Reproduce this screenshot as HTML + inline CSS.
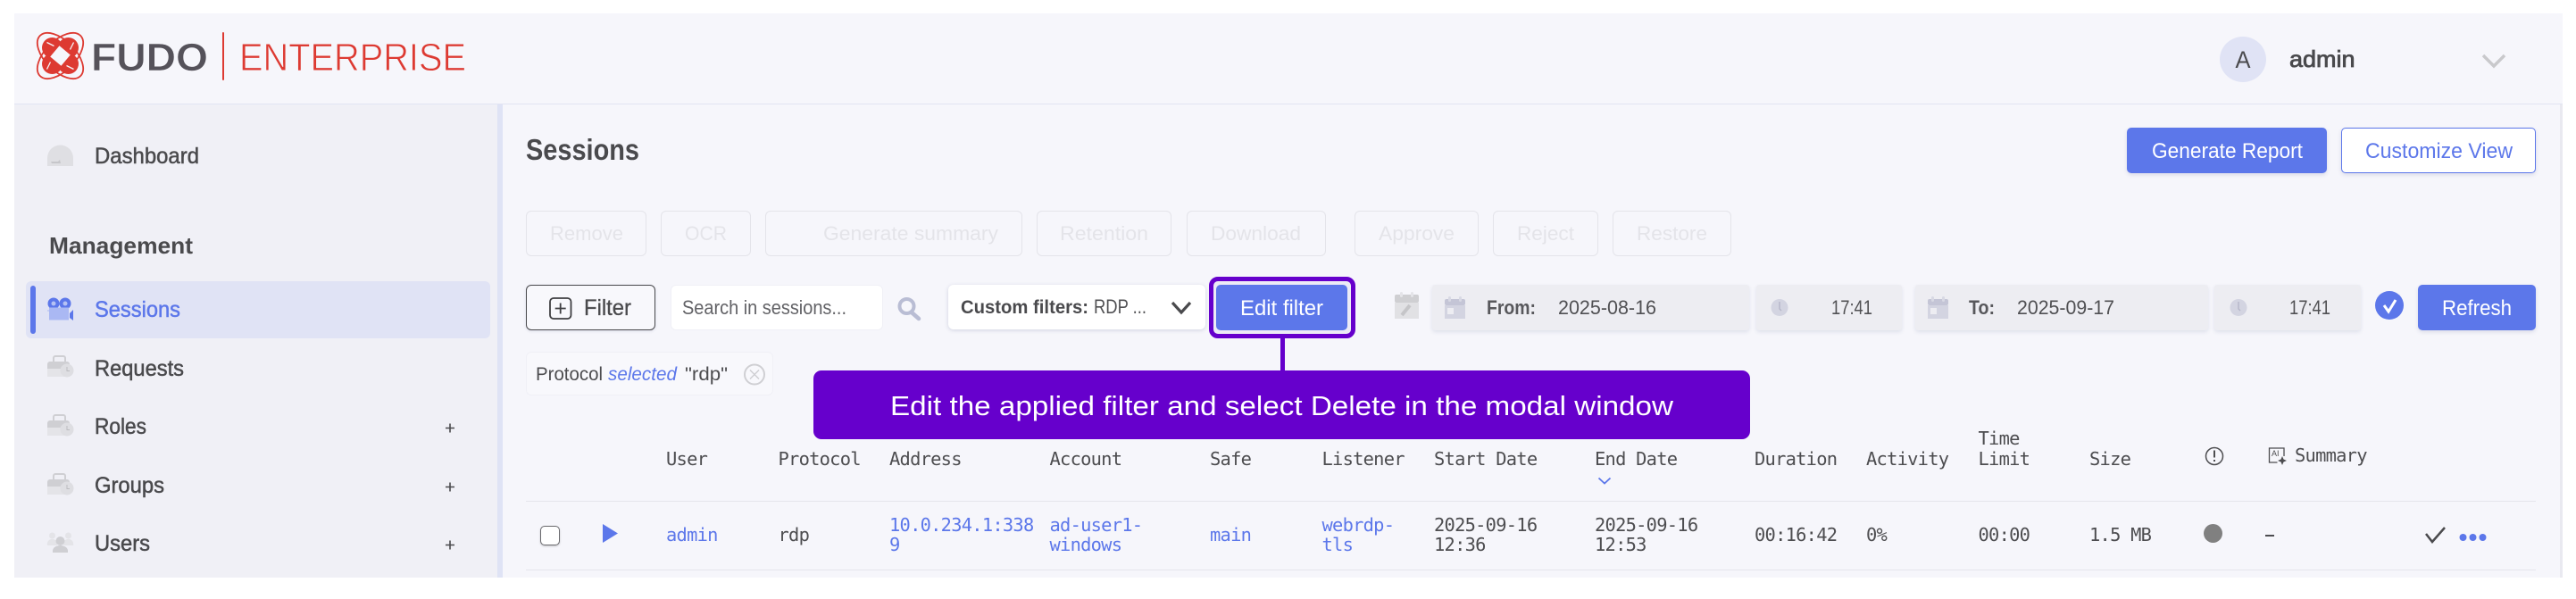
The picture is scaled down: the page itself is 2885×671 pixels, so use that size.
<!DOCTYPE html>
<html lang="en">
<head>
<meta charset="utf-8">
<title>Fudo Enterprise - Sessions</title>
<style>
html,body{margin:0;padding:0;background:#fff;}
body{width:2885px;height:671px;overflow:hidden;position:relative;}
.b{position:absolute;box-sizing:border-box;}
svg{position:absolute;left:0;top:0;}
text{font-family:"Liberation Sans",sans-serif;}
.s{font-size:25px;fill:#4a4a4d;stroke:#4a4a4d;stroke-width:.5px;}
.d{font-size:22.5px;fill:#e4e4e9;}
.m{font-family:"DejaVu Sans Mono","Liberation Mono",monospace;font-size:20.4px;letter-spacing:-.74px;fill:#4d4d50;}
.l{fill:#5c77ea;}
.t{font-size:22px;fill:#505053;}
.bt{font-size:24px;}
</style>
</head>
<body>
<!-- app frame -->
<div class="b" style="left:16px;top:15px;width:2854px;height:632px;background:#f6f6fb;"></div>
<div class="b" style="left:16px;top:116px;width:2854px;height:1px;background:#e1e4f3;"></div>
<div class="b" style="left:16px;top:117px;width:541px;height:530px;background:#f0f0f6;"></div>
<div class="b" style="left:557px;top:117px;width:6px;height:530px;background:#dfe3f5;"></div>
<div class="b" style="left:2867px;top:117px;width:3px;height:530px;background:#e9e9f0;"></div>
<!-- sidebar active -->
<div class="b" style="left:29px;top:315px;width:520px;height:64px;background:#e0e3f5;border-radius:6px;"></div>
<div class="b" style="left:34px;top:320px;width:6px;height:54px;background:#5c77ea;border-radius:3px;"></div>
<!-- top buttons -->
<div class="b" style="left:2382px;top:143px;width:224px;height:51px;background:#5c77ea;border-radius:5px;box-shadow:0 2px 5px rgba(60,70,120,.15);"></div>
<div class="b" style="left:2622px;top:143px;width:218px;height:51px;background:#fff;border:1.5px solid #5c77ea;border-radius:5px;box-shadow:0 2px 5px rgba(60,70,120,.15);"></div>
<!-- disabled row -->
<div class="b dis" style="left:589px;top:236px;width:135px;height:51px;border:1.5px solid #e4e4ea;border-radius:6px;"></div>
<div class="b dis" style="left:740px;top:236px;width:101px;height:51px;border:1.5px solid #e4e4ea;border-radius:6px;"></div>
<div class="b dis" style="left:857px;top:236px;width:288px;height:51px;border:1.5px solid #e4e4ea;border-radius:6px;"></div>
<div class="b dis" style="left:1161px;top:236px;width:151px;height:51px;border:1.5px solid #e4e4ea;border-radius:6px;"></div>
<div class="b dis" style="left:1329px;top:236px;width:156px;height:51px;border:1.5px solid #e4e4ea;border-radius:6px;"></div>
<div class="b dis" style="left:1517px;top:236px;width:139px;height:51px;border:1.5px solid #e4e4ea;border-radius:6px;"></div>
<div class="b dis" style="left:1672px;top:236px;width:118px;height:51px;border:1.5px solid #e4e4ea;border-radius:6px;"></div>
<div class="b dis" style="left:1806px;top:236px;width:133px;height:51px;border:1.5px solid #e4e4ea;border-radius:6px;"></div>
<!-- filter row -->
<div class="b" style="left:589px;top:319px;width:145px;height:51px;background:#f8f8fc;border:1.5px solid #4a4a4d;border-radius:6px;box-shadow:0 1px 3px rgba(60,70,120,.15);"></div>
<div class="b" style="left:751px;top:319px;width:238px;height:51px;background:#fff;border:1px solid #f0f0f6;border-radius:6px;"></div>
<div class="b" style="left:1062px;top:319px;width:288px;height:50px;background:#fff;border-radius:6px;box-shadow:0 1px 5px rgba(60,70,120,.2);"></div>
<div class="b" style="left:1354px;top:310px;width:164px;height:69px;border:5.5px solid #6600cc;border-radius:10px;background:#ecebf6;"></div>
<div class="b" style="left:1362px;top:319px;width:147px;height:51px;background:#5c77ea;border-radius:5px;"></div>
<div class="b" style="left:1604px;top:319px;width:355px;height:51px;background:#ededf2;border-radius:3px;box-shadow:0 2px 4px rgba(60,70,120,.12);"></div>
<div class="b" style="left:1967px;top:319px;width:163px;height:51px;background:#ededf2;border-radius:3px;box-shadow:0 2px 4px rgba(60,70,120,.12);"></div>
<div class="b" style="left:2145px;top:319px;width:328px;height:51px;background:#ededf2;border-radius:3px;box-shadow:0 2px 4px rgba(60,70,120,.12);"></div>
<div class="b" style="left:2480px;top:319px;width:164px;height:51px;background:#ededf2;border-radius:3px;box-shadow:0 2px 4px rgba(60,70,120,.12);"></div>
<div class="b" style="left:2708px;top:319px;width:132px;height:51px;background:#5c77ea;border-radius:5px;box-shadow:0 2px 5px rgba(60,70,120,.15);"></div>
<!-- chip -->
<div class="b" style="left:589px;top:394px;width:277px;height:49px;background:#f8f8fc;border:1px solid #f0f0f6;border-radius:6px;"></div>
<!-- callout -->
<div class="b" style="left:1433.5px;top:379px;width:5px;height:37px;background:#6600cc;"></div>
<div class="b" style="left:911px;top:415px;width:1049px;height:77px;background:#6600cc;border-radius:9px;"></div>
<!-- table lines -->
<div class="b" style="left:589px;top:560.5px;width:2251px;height:1.5px;background:#e5e5ec;"></div>
<div class="b" style="left:589px;top:637.5px;width:2251px;height:1.5px;background:#e5e5ec;"></div>
<!-- checkbox / dots -->
<div class="b" style="left:605px;top:589px;width:22px;height:22px;background:#fff;border:1px solid #6a6a6e;border-radius:5px;box-shadow:0 1px 2px rgba(0,0,0,.2);"></div>
<div class="b" style="left:2486px;top:41px;width:52px;height:51px;background:#e0e3f5;border-radius:50%;"></div>
<div class="b" style="left:2660px;top:326px;width:32px;height:32px;background:#5c77ea;border-radius:50%;"></div>
<div class="b" style="left:2467.5px;top:587px;width:21px;height:21px;background:#808080;border-radius:50%;"></div>

<svg width="2885" height="671" viewBox="0 0 2885 671" xmlns="http://www.w3.org/2000/svg">
  <!-- logo -->
  <g transform="translate(67.5 62.5)">
    <ellipse rx="32" ry="17" transform="rotate(45)" fill="none" stroke="#dd3a32" stroke-width="1.800"/>
    <ellipse rx="32" ry="17" transform="rotate(-45)" fill="none" stroke="#dd3a32" stroke-width="1.800"/>
    <circle cx="-9" cy="-9" r="11.500" fill="#dd3a32"/>
    <circle cx="9" cy="-9" r="11.500" fill="#dd3a32"/>
    <circle cx="-9" cy="9" r="11.500" fill="#dd3a32"/>
    <circle cx="9" cy="9" r="11.500" fill="#dd3a32"/>
    <rect x="-8" y="-8" width="16" height="16" transform="rotate(40)" fill="#f6f6fb"/>
    <path d="M-15-15 L-7-11 M15-15 L11-7 M-15 15 L-11 7 M15 15 L7 11" stroke="#f6f6fb" stroke-width="1.300" fill="none"/>
  </g>
  <text x="102" y="79" font-size="44" font-weight="700" fill="#55525a" stroke="#f6f6fb" stroke-width=".6" textLength="131" lengthAdjust="spacingAndGlyphs">FUDO</text>
  <rect x="249" y="36" width="2" height="54" rx="1" fill="#dd3a32"/>
  <text x="268" y="79" font-size="44" fill="#dd3a32" stroke="#f6f6fb" stroke-width=".9" textLength="254" lengthAdjust="spacingAndGlyphs">ENTERPRISE</text>

  <!-- header right -->
  <text x="2512" y="76" font-size="27" fill="#4a4a4d" text-anchor="middle" textLength="17" lengthAdjust="spacingAndGlyphs">A</text>
  <text x="2564" y="75" class="s" style="stroke-width:.8px;font-size:26px" textLength="73.500" lengthAdjust="spacingAndGlyphs">admin</text>
  <path d="M2781 62 L2793 74 L2805 62" fill="none" stroke="#c9c9cc" stroke-width="3.500"/>

  <!-- sidebar icons -->
  <path d="M53 186 v-9 a14.500 14.500 0 0 1 29 0 v9 z" fill="#dfdfe3"/>
  <path d="M57 181 h8 l2 -2 1 4 h-10 z" fill="#c6c6ca"/>

  <g>
    <circle cx="60" cy="340" r="6.500" fill="#5c77ea"/><circle cx="73" cy="340" r="6.500" fill="#5c77ea"/>
    <circle cx="60" cy="340" r="2.500" fill="#b6c2f4"/><circle cx="73" cy="340" r="2.500" fill="#b6c2f4"/>
    <path d="M53 348.500 h2 v10 h22 v-14 h-22 v3 h-2 z" fill="#aab8f3"/>
    <path d="M78 351 l4 -4 v12 l-4 -3 z" fill="#5c77ea"/>
  </g>
  <g>
    <path d="M60 405 v-4 a2 2 0 0 1 2-2 h9 a2 2 0 0 1 2 2 v4" fill="none" stroke="#cfcfd3" stroke-width="2"/>
    <path d="M53 408 a3 3 0 0 1 3-3 h19 a3 3 0 0 1 3 3 v5 h-25 z" fill="#cfcfd3"/>
    <path d="M53 413 h25 v9 h-25 z" fill="#e4e4e8"/>
    <circle cx="75" cy="415" r="7.500" fill="#dedee2"/>
    <path d="M75 411 v4.500 h3" fill="none" stroke="#bcbcc0" stroke-width="1"/>
  </g>
  <g transform="translate(0 66)">
    <path d="M60 405 v-4 a2 2 0 0 1 2-2 h9 a2 2 0 0 1 2 2 v4" fill="none" stroke="#cfcfd3" stroke-width="2"/>
    <path d="M53 408 a3 3 0 0 1 3-3 h19 a3 3 0 0 1 3 3 v5 h-25 z" fill="#cfcfd3"/>
    <path d="M53 413 h25 v9 h-25 z" fill="#e4e4e8"/>
    <circle cx="75" cy="415" r="7.500" fill="#dedee2"/>
    <path d="M75 411 v4.500 h3" fill="none" stroke="#bcbcc0" stroke-width="1"/>
  </g>
  <g transform="translate(0 132)">
    <path d="M60 405 v-4 a2 2 0 0 1 2-2 h9 a2 2 0 0 1 2 2 v4" fill="none" stroke="#cfcfd3" stroke-width="2"/>
    <path d="M53 408 a3 3 0 0 1 3-3 h19 a3 3 0 0 1 3 3 v5 h-25 z" fill="#cfcfd3"/>
    <path d="M53 413 h25 v9 h-25 z" fill="#e4e4e8"/>
    <circle cx="75" cy="415" r="7.500" fill="#dedee2"/>
    <path d="M75 411 v4.500 h3" fill="none" stroke="#bcbcc0" stroke-width="1"/>
  </g>
  <g>
    <circle cx="58.500" cy="600" r="3.500" fill="#e4e4e8"/><circle cx="76.500" cy="600" r="3.500" fill="#e4e4e8"/>
    <path d="M53 611 a5.500 5.500 0 0 1 11-3 v3 z M71 608 a5.500 5.500 0 0 1 11 3 h-11 z" fill="#e4e4e8"/>
    <circle cx="67.500" cy="606" r="5" fill="#cfcfd3"/>
    <path d="M59 619 v-2 a8.500 6 0 0 1 17 0 v2 z" fill="#cfcfd3"/>
  </g>

  <!-- sidebar text -->
  <text x="106" y="183" class="s" textLength="117" lengthAdjust="spacingAndGlyphs">Dashboard</text>
  <text x="55" y="284" font-size="26" font-weight="700" fill="#4a4a4d" textLength="161" lengthAdjust="spacingAndGlyphs">Management</text>
  <text x="106" y="355" class="s" style="fill:#5c77ea;stroke:#5c77ea" textLength="96" lengthAdjust="spacingAndGlyphs">Sessions</text>
  <text x="106" y="421" class="s" textLength="100" lengthAdjust="spacingAndGlyphs">Requests</text>
  <text x="106" y="486" class="s" textLength="58" lengthAdjust="spacingAndGlyphs">Roles</text>
  <text x="106" y="552" class="s" textLength="78" lengthAdjust="spacingAndGlyphs">Groups</text>
  <text x="106" y="617" class="s" textLength="62" lengthAdjust="spacingAndGlyphs">Users</text>
  <path d="M504 474.500 v10 M499 479.500 h10 M504 540.500 v10 M499 545.500 h10 M504 605.500 v10 M499 610.500 h10" stroke="#4a4a4d" stroke-width="1.600"/>

  <!-- title & top buttons -->
  <text x="589" y="179" font-size="33" font-weight="700" fill="#4a4a4d" textLength="127" lengthAdjust="spacingAndGlyphs">Sessions</text>
  <text x="2410" y="177" class="bt" fill="#fff" textLength="169" lengthAdjust="spacingAndGlyphs">Generate Report</text>
  <text x="2649" y="177" class="bt" fill="#5c77ea" textLength="165" lengthAdjust="spacingAndGlyphs">Customize View</text>

  <!-- disabled -->
  <text x="616" y="269" class="d" textLength="82" lengthAdjust="spacingAndGlyphs">Remove</text>
  <text x="767" y="269" class="d" textLength="47" lengthAdjust="spacingAndGlyphs">OCR</text>
  <text x="922" y="269" class="d" textLength="196" lengthAdjust="spacingAndGlyphs">Generate summary</text>
  <text x="1187" y="269" class="d" textLength="99" lengthAdjust="spacingAndGlyphs">Retention</text>
  <text x="1356" y="269" class="d" textLength="101" lengthAdjust="spacingAndGlyphs">Download</text>
  <text x="1544" y="269" class="d" textLength="85" lengthAdjust="spacingAndGlyphs">Approve</text>
  <text x="1699" y="269" class="d" textLength="64" lengthAdjust="spacingAndGlyphs">Reject</text>
  <text x="1833" y="269" class="d" textLength="79" lengthAdjust="spacingAndGlyphs">Restore</text>

  <!-- filter row -->
  <rect x="616" y="334" width="23.500" height="23" rx="4" fill="none" stroke="#3f3f42" stroke-width="1.800"/>
  <path d="M627.700 339.500 v12 M621.700 345.500 h12" stroke="#3f3f42" stroke-width="1.800"/>
  <text x="654" y="353" font-size="25" fill="#4a4a4d" stroke="#4a4a4d" stroke-width=".3" textLength="53" lengthAdjust="spacingAndGlyphs">Filter</text>
  <text x="764" y="352" class="t" style="fill:#626266" textLength="184" lengthAdjust="spacingAndGlyphs">Search in sessions...</text>
  <circle cx="1015.500" cy="343" r="8" fill="none" stroke="#b9bdd4" stroke-width="4"/>
  <path d="M1021 350 L1029 357" stroke="#b9bdd4" stroke-width="4.500" stroke-linecap="round"/>
  <text x="1076" y="351" font-size="21.500" font-weight="700" fill="#4a4a4d" textLength="143" lengthAdjust="spacingAndGlyphs">Custom filters:</text>
  <text x="1225" y="351" class="t" textLength="59" lengthAdjust="spacingAndGlyphs">RDP ...</text>
  <path d="M1313 339 L1323 350 L1333 339" fill="none" stroke="#4a4a4d" stroke-width="3.200"/>
  <text x="1389" y="353" font-size="24" fill="#fff" textLength="93" lengthAdjust="spacingAndGlyphs">Edit filter</text>

  <!-- date icons -->
  <g>
    <rect x="1562" y="330" width="27" height="9" rx="2" fill="#cfcfd2"/>
    <rect x="1562" y="339" width="27" height="18" fill="#e1e1e4"/>
    <rect x="1568" y="327" width="3" height="6" rx="1.500" fill="#e4e4e8"/><rect x="1580" y="327" width="3" height="6" rx="1.500" fill="#e4e4e8"/>
    <path d="M1570 353 l9 -11" stroke="#c5c5c8" stroke-width="4"/>
  </g>
  <g>
    <rect x="1618" y="335" width="23" height="7" rx="2" fill="#c4c5d6"/>
    <rect x="1618" y="342" width="23" height="15" fill="#d3d4e1"/>
    <rect x="1622" y="332" width="3" height="6" rx="1.500" fill="#d8d9e4"/><rect x="1634" y="332" width="3" height="6" rx="1.500" fill="#d8d9e4"/>
    <rect x="1621" y="345" width="7" height="7" fill="#ededf2"/>
  </g>
  <g transform="translate(541 0)">
    <rect x="1618" y="335" width="23" height="7" rx="2" fill="#c4c5d6"/>
    <rect x="1618" y="342" width="23" height="15" fill="#d3d4e1"/>
    <rect x="1622" y="332" width="3" height="6" rx="1.500" fill="#d8d9e4"/><rect x="1634" y="332" width="3" height="6" rx="1.500" fill="#d8d9e4"/>
    <rect x="1621" y="345" width="7" height="7" fill="#ededf2"/>
  </g>
  <circle cx="1993" cy="344.500" r="9.500" fill="#d3d4e1"/>
  <path d="M1993 338 v8 l2 2" fill="none" stroke="#b5b6c8" stroke-width="1.400"/>
  <circle cx="2507" cy="344.500" r="9.500" fill="#d3d4e1"/>
  <path d="M2507 338 v8 l2 2" fill="none" stroke="#b5b6c8" stroke-width="1.400"/>

  <text x="1665" y="352" font-size="22" font-weight="700" fill="#58585c" textLength="55" lengthAdjust="spacingAndGlyphs">From:</text>
  <text x="1745" y="352" class="t" textLength="110" lengthAdjust="spacingAndGlyphs">2025-08-16</text>
  <text x="2051" y="352" class="t" textLength="46" lengthAdjust="spacingAndGlyphs">17:41</text>
  <text x="2205" y="352" font-size="22" font-weight="700" fill="#58585c" textLength="29" lengthAdjust="spacingAndGlyphs">To:</text>
  <text x="2259" y="352" class="t" textLength="109" lengthAdjust="spacingAndGlyphs">2025-09-17</text>
  <text x="2564" y="352" class="t" textLength="46" lengthAdjust="spacingAndGlyphs">17:41</text>
  <path d="M2670 342 L2675 349 L2683 336" fill="none" stroke="#fff" stroke-width="3"/>
  <text x="2735" y="353" class="bt" fill="#fff" textLength="78" lengthAdjust="spacingAndGlyphs">Refresh</text>

  <!-- chip -->
  <text x="600" y="426" font-size="21" fill="#4d4d50" textLength="75" lengthAdjust="spacingAndGlyphs">Protocol</text>
  <text x="681" y="426" font-size="21" font-style="italic" fill="#5c77ea" textLength="77" lengthAdjust="spacingAndGlyphs">selected</text>
  <text x="767" y="426" font-size="21" fill="#4d4d50" textLength="48" lengthAdjust="spacingAndGlyphs">"rdp"</text>
  <circle cx="845" cy="419.500" r="11" fill="none" stroke="#cfcfd3" stroke-width="2"/>
  <path d="M840 414.500 L850 424.500 M850 414.500 L840 424.500" stroke="#cfcfd3" stroke-width="1.500"/>

  <!-- callout text -->
  <text x="997" y="465" font-size="31" fill="#fff" textLength="877" lengthAdjust="spacingAndGlyphs">Edit the applied filter and select Delete in the modal window</text>

  <!-- table header -->
  <text x="746" y="521" class="m">User</text>
  <text x="871.500" y="521" class="m">Protocol</text>
  <text x="996" y="521" class="m">Address</text>
  <text x="1175.500" y="521" class="m">Account</text>
  <text x="1355" y="521" class="m">Safe</text>
  <text x="1480.500" y="521" class="m">Listener</text>
  <text x="1606" y="521" class="m">Start Date</text>
  <text x="1786" y="521" class="m">End Date</text>
  <path d="M1790.500 535.500 L1797 541.500 L1803.500 535.500" fill="none" stroke="#5c77ea" stroke-width="1.800"/>
  <text x="1965" y="521" class="m">Duration</text>
  <text x="2090" y="521" class="m">Activity</text>
  <text x="2215.500" y="498" class="m">Time</text>
  <text x="2215.500" y="521" class="m">Limit</text>
  <text x="2340" y="521" class="m">Size</text>
  <circle cx="2480" cy="511" r="9.500" fill="none" stroke="#4d4d50" stroke-width="1.500"/>
  <path d="M2480 504.500 v8 M2480 515 v2" stroke="#4d4d50" stroke-width="2"/>
  <path d="M2558 511 v-9 h-16.500 v16 h9" fill="none" stroke="#4d4d50" stroke-width="1.300"/>
  <path d="M2556 511 l1.500 3.500 3.500 1.500 -3.500 1.500 -1.500 3.500 -1.500 -3.500 -3.500 -1.500 3.500 -1.500 z" fill="#4d4d50"/>
  <text x="2544" y="511" font-size="9" fill="#4d4d50">AI</text>
  <text x="2570" y="517" class="m">Summary</text>

  <!-- table row -->
  <path d="M675 587 L692 597.500 L675 608 z" fill="#5c77ea"/>
  <text x="746" y="606" class="m l">admin</text>
  <text x="871.500" y="606" class="m">rdp</text>
  <text x="996" y="595" class="m l">10.0.234.1:338</text>
  <text x="996" y="617" class="m l">9</text>
  <text x="1175.500" y="595" class="m l">ad-user1-</text>
  <text x="1175.500" y="617" class="m l">windows</text>
  <text x="1355" y="606" class="m l">main</text>
  <text x="1480.500" y="595" class="m l">webrdp-</text>
  <text x="1480.500" y="617" class="m l">tls</text>
  <text x="1606" y="595" class="m">2025-09-16</text>
  <text x="1606" y="617" class="m">12:36</text>
  <text x="1786" y="595" class="m">2025-09-16</text>
  <text x="1786" y="617" class="m">12:53</text>
  <text x="1965" y="606" class="m">00:16:42</text>
  <text x="2090" y="606" class="m">0%</text>
  <text x="2215.500" y="606" class="m">00:00</text>
  <text x="2340" y="606" class="m">1.5 MB</text>
  <rect x="2537" y="599" width="10" height="2" fill="#4d4d50"/>
  <path d="M2717 598 L2724 607 L2738 591" fill="none" stroke="#4a4a4d" stroke-width="2.500"/>
  <circle cx="2758.500" cy="602" r="4" fill="#5c77ea"/><circle cx="2769.500" cy="602" r="4" fill="#5c77ea"/><circle cx="2780.500" cy="602" r="4" fill="#5c77ea"/>
</svg>
</body>
</html>
